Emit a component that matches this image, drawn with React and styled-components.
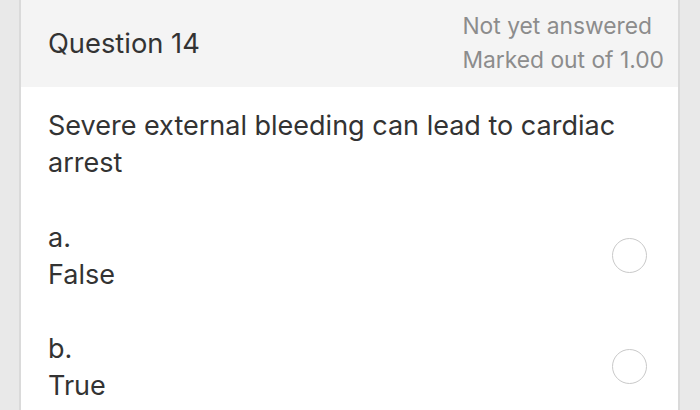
import React from "react";
import styled, { createGlobalStyle } from "styled-components";

const Global = createGlobalStyle`
  html, body { margin: 0; padding: 0; background: #e9e9e9; }
  body { font-family: Inter, "Liberation Sans", Arial, sans-serif; }
`;

const Page = styled.div`
  width: 700px;
  height: 410px;
  overflow: hidden;
  padding: 0 20px 0 19px;
  box-sizing: border-box;
  background: #e9e9e9;
`;

const Card = styled.div`
  height: 100%;
  background: #ffffff;
  border-left: 2px solid #dadada;
  border-right: 2px solid #dadada;
`;

const Header = styled.div`
  height: 87px;
  background: #f4f4f4;
  display: flex;
  align-items: center;
  justify-content: space-between;
  padding: 0 14px 0 27px;
`;

const Title = styled.div`
  font-size: 27.3px;
  color: #333333;
  margin-top: -1px;
`;

const Meta = styled.div`
  font-size: 22.8px;
  line-height: 34px;
  color: #8c8c8c;
  margin-top: -2px;
`;

const Body = styled.div`
  padding: 21px 31px 0 27px;
`;

const QuestionText = styled.div`
  font-size: 27px;
  line-height: 36.5px;
  color: #333333;
  margin-bottom: 39px;
`;

const Option = styled.label`
  display: flex;
  align-items: center;
  justify-content: space-between;
  margin-bottom: 38px;
`;

const OptionText = styled.div`
  font-size: 27px;
  line-height: 36.5px;
  color: #333333;
`;

const Radio = styled.span`
  width: 35px;
  height: 35px;
  box-sizing: border-box;
  border-radius: 50%;
  border: 1.5px solid #c9c9c9;
  background: #ffffff;
  margin-top: -2px;
`;

const options = [
  { letter: "a.", text: "False" },
  { letter: "b.", text: "True" },
];

export default function App() {
  return (
    <>
      <Global />
      <Page>
        <Card>
          <Header>
            <Title>Question 14</Title>
            <Meta>
              <div>Not yet answered</div>
              <div>Marked out of 1.00</div>
            </Meta>
          </Header>
          <Body>
            <QuestionText>
              Severe external bleeding can lead to cardiac
              <br />
              arrest
            </QuestionText>
            {options.map((o) => (
              <Option key={o.letter}>
                <OptionText>
                  <div>{o.letter}</div>
                  <div>{o.text}</div>
                </OptionText>
                <Radio />
              </Option>
            ))}
          </Body>
        </Card>
      </Page>
    </>
  );
}
